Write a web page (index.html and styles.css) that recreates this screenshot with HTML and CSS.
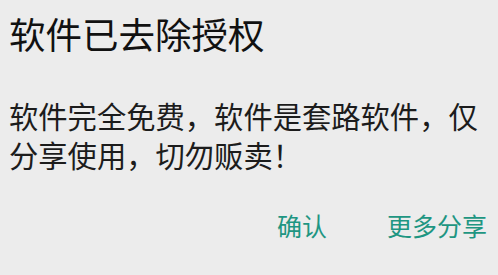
FILE: index.html
```html
<!DOCTYPE html>
<html lang="zh-CN">
<head>
    <meta charset="UTF-8">
    <title>软件已去除授权</title>
    <link rel="stylesheet" href="styles.css">
</head>
<body>
    <div class="dialog" role="dialog" aria-labelledby="dialogTitle">
        <h1 class="dialog-title" id="dialogTitle">软件已去除授权</h1>
        <p class="dialog-message">软件完全免费，软件是套路软件，仅分享使用，切勿贩卖！</p>
        <div class="dialog-actions">
            <button class="dialog-btn">确认</button>
            <button class="dialog-btn">更多分享</button>
        </div>
    </div>
</body>
</html>
```

FILE: styles.css
```css
* {
    margin: 0;
    padding: 0;
    box-sizing: border-box;
}

body {
    width: 498px;
    height: 275px;
    background-color: #ececec;
    font-family: "Noto Sans CJK SC", "Noto Sans", sans-serif;
    overflow: hidden;
}

.dialog {
    display: flex;
    flex-direction: column;
    padding: 10px 10px 0 9px;
}

.dialog-title {
    font-size: 36.5px;
    font-weight: normal;
    line-height: 48px;
    color: #111;
}

.dialog-message {
    margin-top: 38px;
    font-size: 29.3px;
    line-height: 39px;
    color: #1c1c1c;
}

.dialog-actions {
    display: flex;
    justify-content: flex-end;
    gap: 60px;
    margin-top: 34px;
    padding-right: 1px;
}

.dialog-btn {
    border: none;
    background: none;
    font-family: inherit;
    font-size: 25px;
    line-height: 34px;
    color: #1e9682;
    cursor: pointer;
}
```
